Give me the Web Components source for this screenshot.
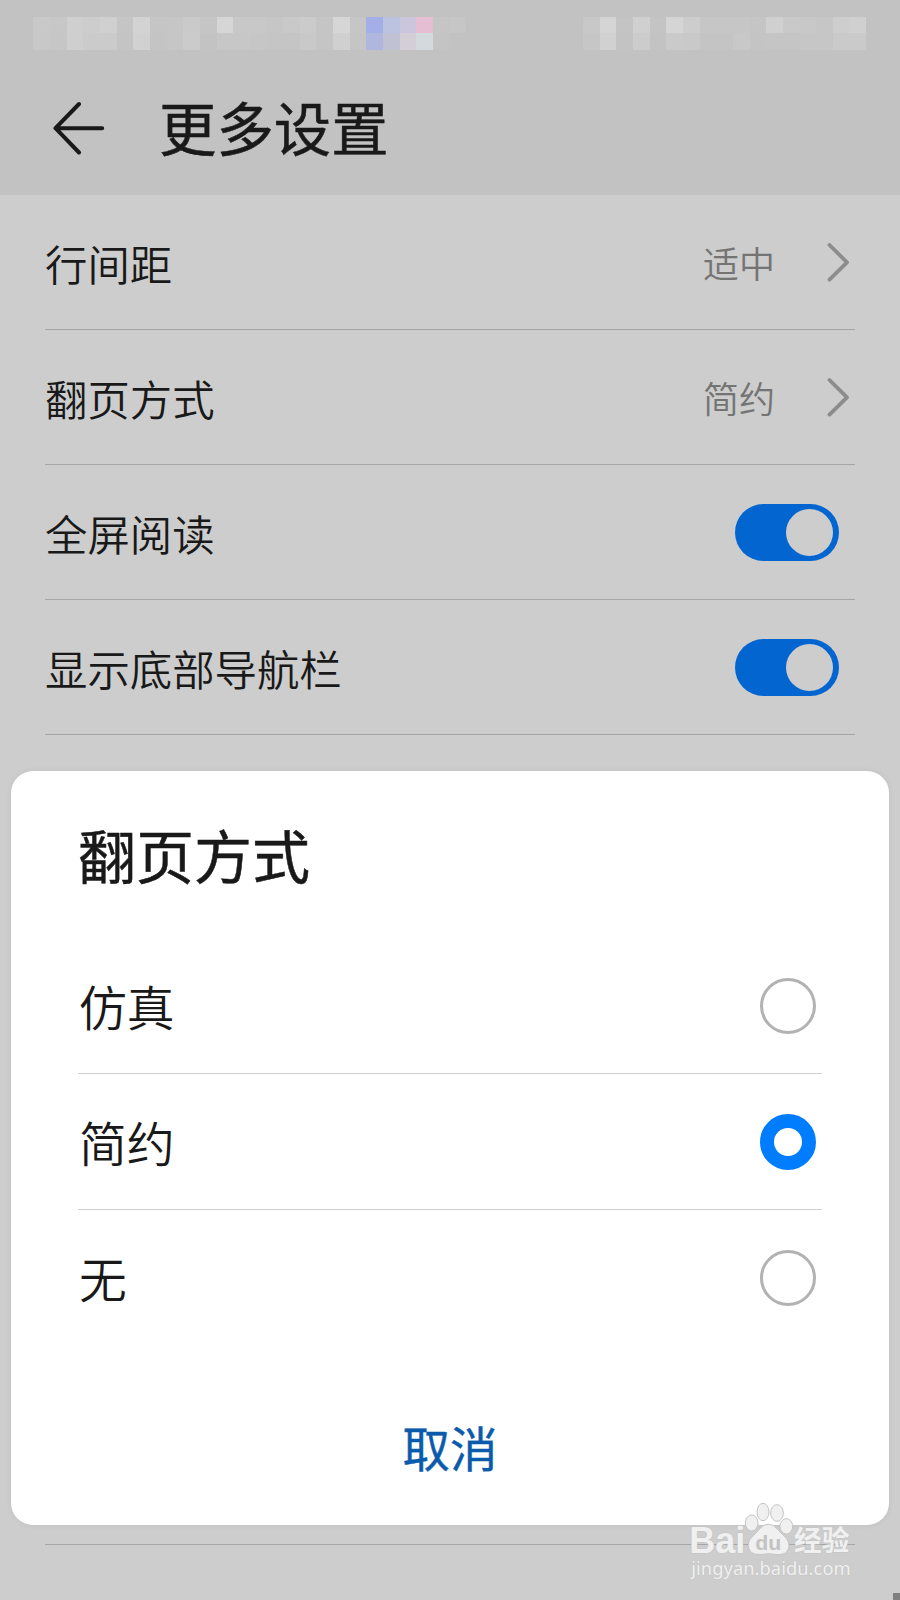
<!DOCTYPE html>
<html lang="zh-CN">
<head>
<meta charset="utf-8">
<title>更多设置</title>
<style>
html,body{margin:0;padding:0;background:#cdcdcd}
body{width:900px;height:1600px;overflow:hidden;font-family:"Noto Sans CJK SC",sans-serif;color:#191919}
</style>
</head>
<body>
<settings-screen>
  <mosaic-status slot="status"></mosaic-status>
  <title-bar slot="title">更多设置</title-bar>
  <setting-row kind="link" value="适中">行间距</setting-row>
  <setting-row kind="link" value="简约">翻页方式</setting-row>
  <setting-row kind="switch">全屏阅读</setting-row>
  <setting-row kind="switch">显示底部导航栏</setting-row>
  <setting-row></setting-row>
  <setting-row></setting-row>
  <setting-row></setting-row>
  <setting-row></setting-row>
  <setting-row></setting-row>
  <setting-row></setting-row>
  <choice-dialog slot="overlay">
    <span slot="heading">翻页方式</span>
    <choice-option>仿真</choice-option>
    <choice-option checked>简约</choice-option>
    <choice-option last>无</choice-option>
    <span slot="cancel">取消</span>
  </choice-dialog>
  <site-mark slot="overlay"></site-mark>
</settings-screen>
<script>
const define = (name, html) => customElements.define(name, class extends HTMLElement {
  connectedCallback() {
    if (this.shadowRoot) return;
    this.attachShadow({mode: 'open'}).innerHTML = typeof html === 'function' ? html(this) : html;
  }
});

define('settings-screen', `
<style>
:host{display:block;position:relative;width:900px;height:1600px;overflow:hidden;background:#cdcdcd}
header{height:195px;background:#c2c2c2;display:flex;flex-direction:column}
main{padding:0 45px;display:flex;flex-direction:column}
i{position:absolute;right:0;bottom:0;width:7px;height:7px;background:#808080}
</style>
<header><slot name="status"></slot><slot name="title"></slot></header>
<main><slot></slot></main>
<slot name="overlay"></slot><i></i>`);

define('mosaic-status', () => {
  const g = s => s.split(' ').map(c => c.length === 2 ? '#' + c + c + c : '#' + c);
  const gap = Array(7).fill('c2').join(' ');
  const top = g('c9 c7 cf cd d0 c5 d3 c5 c6 ca c5 d6 c8 c8 c6 c9 cb c5 d6 c6 a3afe6 bcc3e0 cbc6dc e6bdd2 c5 c6 ' + gap + ' c8 d5 c4 d0 c4 d5 cd c6 c6 c6 c5 d0 c9 c8 c6 ce d0');
  const low = g('c8 c6 cf cb cb c4 d1 c4 c6 cb c3 c7 c7 c6 c5 c5 c9 c5 d0 c5 b0b7de c0c2d4 d4ced7 d2dadd c4 c2 ' + gap + ' c6 d1 c3 cc c3 ca c9 c4 c4 c8 c4 c5 c5 c6 c6 ca ca');
  return `<style>
:host{display:block;box-sizing:border-box;height:60px;padding:16.67px 33.33px 0}
div{display:grid;grid-template-columns:repeat(50,16.667px);grid-auto-rows:16.667px}
</style><div>${[...top, ...low].map(c => `<b style="background:${c}"></b>`).join('')}</div>`;
});

define('title-bar', `
<style>
:host{display:flex;align-items:center;height:135px;font-size:57.4px;font-weight:400;line-height:1;-webkit-text-stroke:.5px #191919}
svg{width:54px;height:54px;margin:0 53px 0 52px}
span{padding-bottom:1px}
</style>
<svg viewBox="0 0 54 54" fill="none" stroke="#191919" stroke-width="4" stroke-linecap="round" stroke-linejoin="round"><path d="M27 3 3.5 27.2 27 51.5M3.5 27.2H50.2"/></svg>
<span><slot></slot></span>`);

define('setting-row', el => `
<style>
:host{display:flex;align-items:center;box-sizing:border-box;height:135px;border-bottom:1px solid #a5a5a5;font-size:42.4px;font-weight:350;line-height:1}
.label{flex:1;padding-top:3px}
.value{font-size:36px;color:#747474;padding:0 52px 1px 0}
svg{width:23px;height:42px;margin-right:5px}
.switch{width:104px;height:57px;border-radius:29px;background:#0366d0;margin:1px 16px 0 0;display:flex;justify-content:flex-end;align-items:center;box-sizing:border-box;padding-right:6px}
.switch::after{content:"";width:47px;height:47px;border-radius:50%;background:#cdcdcd}
</style>
<span class="label"><slot></slot></span>
${el.getAttribute('kind') === 'link' ? `<span class="value">${el.getAttribute('value')}</span><svg viewBox="0 0 23 42" fill="none" stroke="#8c8c8c" stroke-width="3.8" stroke-linecap="round" stroke-linejoin="round"><path d="M2.5 4 20 21.3 2.5 38.6"/></svg>` : ''}
${el.getAttribute('kind') === 'switch' ? '<div class="switch"></div>' : ''}`);

define('choice-dialog', `
<style>
:host{position:absolute;left:11px;top:771px;width:878px;height:754px;border-radius:22px;background:#fff;box-sizing:border-box;padding:0 67px;display:flex;flex-direction:column;box-shadow:0 0 6px rgba(0,0,0,.06)}
h2{margin:0;height:167px;box-sizing:border-box;padding-top:54px;font-size:58px;font-weight:400;line-height:1;-webkit-text-stroke:.5px #191919}
button{all:unset;margin-top:77px;text-align:center;font-size:47.5px;font-weight:400;line-height:1;color:#0b5bad;-webkit-text-stroke:.4px #0b5bad}
</style>
<h2><slot name="heading"></slot></h2>
<slot></slot>
<button><slot name="cancel"></slot></button>`);

define('choice-option', `
<style>
:host{display:flex;align-items:center;justify-content:space-between;box-sizing:border-box;height:136px;border-bottom:1px solid #d1d1d1;font-size:47.8px;font-weight:350;line-height:1}
:host([last]){border-color:transparent}
span{padding-left:1px}
i{box-sizing:border-box;width:56px;height:56px;border-radius:50%;border:3px solid #b2b2b2;margin-right:6.5px}
:host([checked]) i{border:14px solid #007dff}
</style>
<span><slot></slot></span><i></i>`);

define('site-mark', `
<style>
:host{position:absolute;left:660px;top:1490px;width:240px;height:110px}
svg{display:block;width:240px;height:110px}
text{paint-order:stroke;stroke-linejoin:round}
</style>
<svg viewBox="0 0 720 330" fill="#f0f0f0" stroke="#c4c4c4" stroke-width="3">
<g font-weight="700">
<text x="88" y="190" font-family="Liberation Sans" font-size="110" textLength="168" lengthAdjust="spacingAndGlyphs">Bai</text>
<text x="402" y="183" font-family="Noto Sans CJK SC" font-size="84" textLength="166" lengthAdjust="spacingAndGlyphs">经验</text>
</g>
<ellipse cx="275" cy="99" rx="19" ry="24"/><ellipse cx="309" cy="66" rx="18" ry="26"/><ellipse cx="351" cy="69" rx="19" ry="25"/><ellipse cx="379" cy="109" rx="19" ry="23"/>
<path d="M325 103C306 103 299 119 285 132C268 147 261 160 267 176C274 198 300 194 325 191C351 194 378 199 385 176C391 160 382 146 367 133C353 120 345 103 325 103Z"/>
<text x="286" y="180" font-family="Liberation Sans" font-size="62" font-weight="700" fill="#c3c3c3" stroke="none" textLength="78" lengthAdjust="spacingAndGlyphs">du</text>
<text x="94" y="256" font-family="Noto Sans" font-size="55" stroke="#bdbdbd" stroke-width="2" textLength="478" lengthAdjust="spacing">jingyan.baidu.com</text>
</svg>`);
</script>
</body>
</html>
